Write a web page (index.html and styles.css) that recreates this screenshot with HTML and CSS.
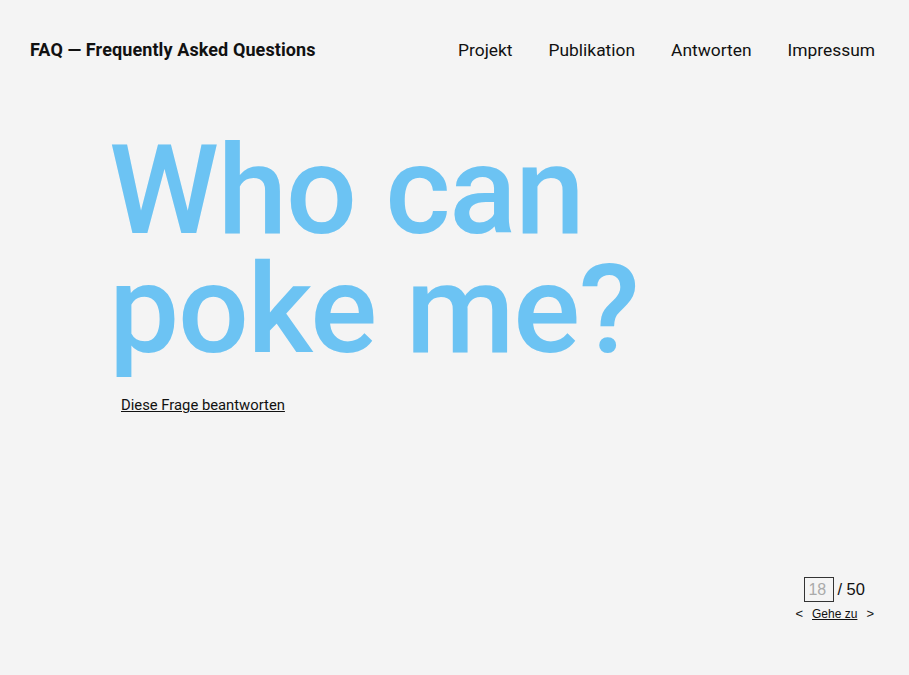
FILE: index.html
```html
<!DOCTYPE html>
<html lang="de">
<head>
<meta charset="utf-8">
<title>FAQ — Frequently Asked Questions</title>
<link rel="stylesheet" href="styles.css">
</head>
<body>
<div class="page">
  <header class="header">
    <div class="site-title">FAQ — Frequently Asked Questions</div>
    <nav class="nav">
      <a href="#">Projekt</a>
      <a href="#">Publikation</a>
      <a href="#">Antworten</a>
      <a href="#">Impressum</a>
    </nav>
  </header>
  <main class="main">
    <h1 class="question">Who can<br>poke me?</h1>
    <a class="answer-link" href="#">Diese Frage beantworten</a>
  </main>
  <footer class="footer">
    <div class="pager">
      <div class="pager-row">
        <input class="pager-input" type="text" placeholder="18">
        <span class="pager-total">/ 50</span>
      </div>
      <div class="pager-row pager-nav">
        <span class="arrow">&lt;</span>
        <a href="#" class="goto">Gehe zu</a>
        <span class="arrow">&gt;</span>
      </div>
    </div>
  </footer>
</div>
</body>
</html>
```
FILE: styles.css
```css
html, body {
  margin: 0;
  padding: 0;
  background: #f4f4f4;
}
body {
  font-family: Roboto, "Liberation Sans", sans-serif;
  color: #111;
}
.page {
  min-height: 100vh;
  display: flex;
  flex-direction: column;
}
.header {
  display: flex;
  justify-content: space-between;
  align-items: baseline;
  padding: 39px 34px 0 30px;
}
.site-title {
  font-size: 18px;
  font-weight: 700;
  letter-spacing: 0.1px;
}
.nav {
  display: flex;
  gap: 36px;
}
.nav a {
  color: #111;
  text-decoration: none;
  font-size: 17.4px;
}
.main {
  flex: 1;
  padding: 71px 0 0 109px;
}
.question {
  margin: 0;
  font-size: 125px;
  line-height: 119px;
  font-weight: 500;
  color: #6cc3f3;
  letter-spacing: -1.3px;
}
.answer-link {
  display: inline-block;
  margin: 27px 0 0 12px;
  font-size: 14.8px;
  color: #111;
  text-decoration: underline;
}
.footer {
  display: flex;
  justify-content: flex-end;
  padding: 0 35px 54px 0;
}
.pager {
  display: flex;
  flex-direction: column;
  align-items: center;
  gap: 4px;
}
.pager-row {
  display: flex;
  align-items: center;
  gap: 3px;
}
.pager-input {
  width: 30px;
  height: 25px;
  box-sizing: border-box;
  border: 1px solid #333;
  background: transparent;
  font-family: "Liberation Sans", Arial, sans-serif;
  font-size: 16px;
  padding: 0 3px;
  color: #111;
}
.pager-input::placeholder {
  color: #aaa;
}
.pager-total {
  font-family: "Liberation Sans", Arial, sans-serif;
  font-size: 16.5px;
}
.pager-nav {
  gap: 9px;
  font-family: "Liberation Sans", Arial, sans-serif;
  font-size: 13px;
}
.goto {
  color: #111;
  font-size: 12px;
  text-decoration: underline;
}
```
